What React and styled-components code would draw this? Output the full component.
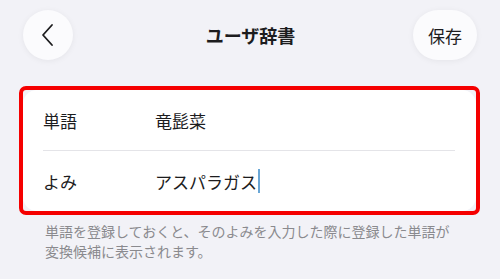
import React from "react";
import styled, { createGlobalStyle } from "styled-components";

const GlobalStyle = createGlobalStyle`
  html, body {
    margin: 0;
    padding: 0;
    background: #f2f2f7;
  }
  body {
    font-family: "Noto Sans CJK JP", "Noto Sans", sans-serif;
    color: #1c1c1e;
  }
`;

const Page = styled.div`
  width: 500px;
  height: 279px;
  box-sizing: border-box;
  padding: 10px 20px 0 19px;
  background: #f2f2f7;
  overflow: hidden;
`;

const Header = styled.div`
  display: flex;
  align-items: center;
  justify-content: space-between;
  height: 50px;
  padding: 0 3px 0 4px;
  position: relative;
`;

const RoundButton = styled.button`
  height: 50px;
  min-width: 50px;
  padding: ${({ $wide }) => ($wide ? "0 15px" : "0")};
  border: none;
  border-radius: 25px;
  background: #fbfbfd;
  box-shadow: 0 1px 6px rgba(0, 0, 0, 0.06);
  display: flex;
  align-items: center;
  justify-content: center;
  font-family: inherit;
  font-size: 17px;
  color: #1c1c1e;
  cursor: pointer;
`;

const Title = styled.div`
  position: absolute;
  left: 0;
  right: 0;
  text-align: center;
  font-size: 18px;
  font-weight: 700;
  pointer-events: none;
  margin-left: 2px;
`;

const Highlight = styled.div`
  margin-top: 26px;
  border: 4px solid #f50000;
  border-radius: 7px;
  background: #f2f2f7;
`;

const Card = styled.div`
  background: #ffffff;
  border-radius: 14px;
  padding: 0 21px 0 20px;
`;

const Row = styled.div`
  display: flex;
  align-items: center;
  height: 60px;
  border-bottom: ${({ $last }) => ($last ? "none" : "1px solid #e4e4e8")};
  font-size: 17px;
`;

const Label = styled.div`
  width: 112px;
  flex-shrink: 0;
`;

const Value = styled.div`
  display: flex;
  align-items: center;
`;

const Caret = styled.span`
  display: inline-block;
  width: 2px;
  height: 24px;
  margin-left: 1px;
  background: #6aa7d6;
`;

const Note = styled.p`
  margin: 6px 0 0;
  padding: 0 20px 0 26px;
  font-size: 14px;
  line-height: 20px;
  color: #8a8a8e;
`;

const Chevron = () => (
  <svg width="14" height="24" viewBox="0 0 14 24">
    <path
      d="M11 2 L2 12 L11 22"
      fill="none"
      stroke="#1c1c1e"
      strokeWidth="1.8"
      strokeLinecap="round"
      strokeLinejoin="round"
    />
  </svg>
);

export default function App() {
  return (
    <>
      <GlobalStyle />
      <Page>
        <Header>
          <RoundButton aria-label="戻る">
            <Chevron />
          </RoundButton>
          <Title>ユーザ辞書</Title>
          <RoundButton $wide>保存</RoundButton>
        </Header>
        <Highlight>
          <Card>
            <Row>
              <Label>単語</Label>
              <Value>竜髭菜</Value>
            </Row>
            <Row $last>
              <Label>よみ</Label>
              <Value>
                アスパラガス
                <Caret />
              </Value>
            </Row>
          </Card>
        </Highlight>
        <Note>
          単語を登録しておくと、そのよみを入力した際に登録した単語が
          <br />
          変換候補に表示されます。
        </Note>
      </Page>
    </>
  );
}
